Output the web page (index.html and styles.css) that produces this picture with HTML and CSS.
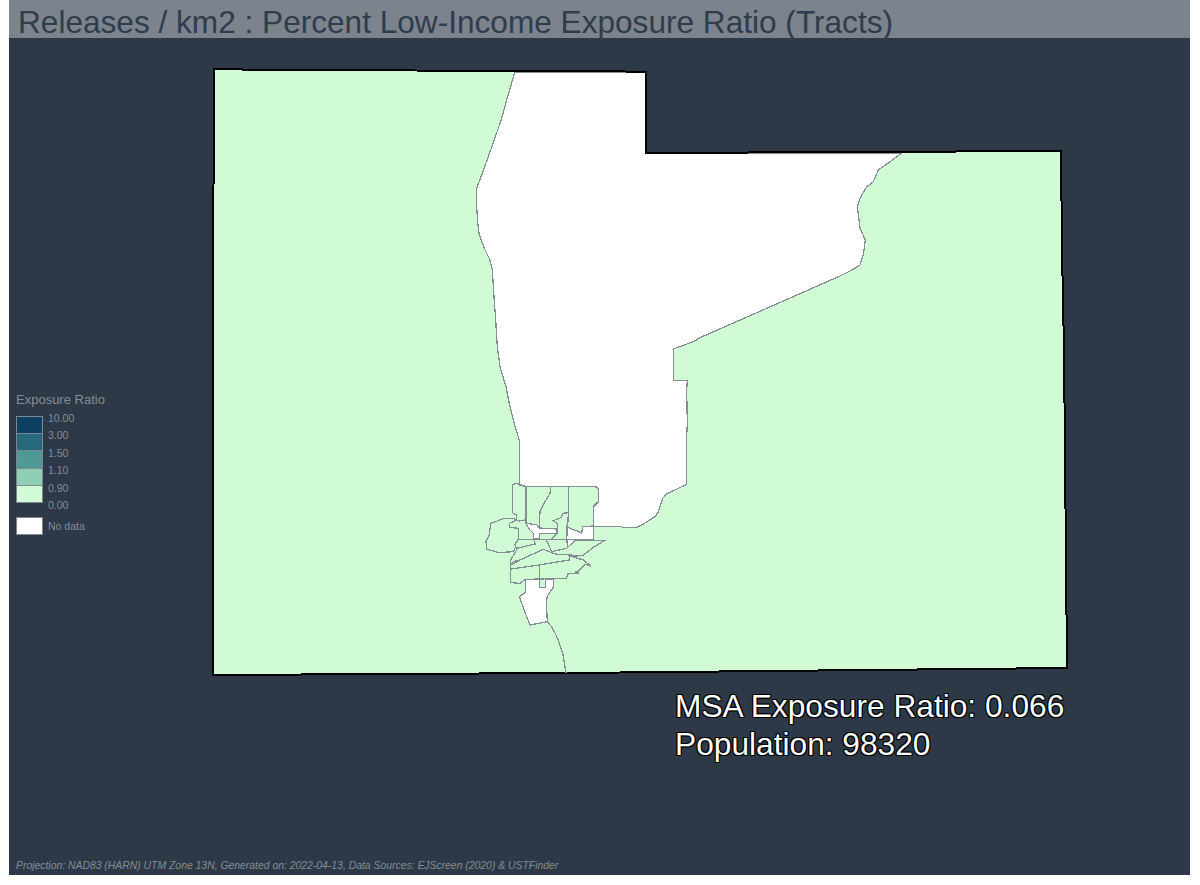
FILE: index.html
```html
<!DOCTYPE html>
<html lang="en">
<head>
<meta charset="utf-8">
<title>Releases / km2 : Percent Low-Income Exposure Ratio (Tracts)</title>
<link rel="stylesheet" href="styles.css">
</head>
<body>
<main class="panel">
  <h1 class="title">Releases / km2 : Percent Low-Income Exposure Ratio (Tracts)</h1>
  <section class="stage">
    <svg class="map" viewBox="9 38 1181 837" width="1181" height="837" aria-label="Tract map">
      <path class="county" d="M214,69 L270,70 L559,71 L604,71 L646,72 L646,153 L1061,151 L1062,250 L1064,350 L1066,560 L1067,668 L570,673 L213,675 L213,310 Z"/>
      <path class="nodata" d="M514.7,72 L511.7,83 L506.7,100 L501.7,118 L496.7,133 L488.3,156.7 L481.7,175 L476.7,188 L476.7,206.7 L477.7,223 L479.3,235 L485,250 L490,260 L492.3,270 L494,296.7 L495.7,320 L497.3,346.7 L500,366.7 L506,386.7 L510,406.7 L515,426.7 L519.3,440 L519.3,485 L526.3,486.7 L595,486.7 L598.3,488.3 L598.3,501.7 L593.3,506 L593.3,526.7 L621.7,526.7 L622.3,527.3 L636.7,527.3 L643.3,524 L655,516.7 L658.3,511.7 L662.7,498.3 L666.7,494 L686.7,484.3 L686.7,436.7 L687.3,423 L686.7,390 L687.3,380.7 L673.3,380.7 L673.3,349 L693.3,341.7 L700,337.7 L840,276 L853.3,269.3 L860,265 L863.3,255 L865.3,240 L860,228.3 L857.3,206.7 L860,198.3 L866.7,186.7 L873.3,181.7 L878.3,170 L890,161.7 L901.7,153 L646,153 L646,72 Z"/>
      <path class="outline" d="M214,69 L270,70 L559,71 L604,71 L646,72 L646,153 L1061,151 L1062,250 L1064,350 L1066,560 L1067,668 L570,673 L213,675 L213,310 Z"/>
      <g class="city" transform="translate(470 470) scale(.33333)">
        <path class="white" d="M168,160 L200,164 L208,174 L260,177 L260,190 L208,190 L208,207 L190,207 L190,190 L178,178 Z"/>
        <path class="white" d="M290,168 L300,175 L320,182 L335,190 L338,170 L370,168 L370,208 L318,210 L300,225 L293,232 L290,205 Z"/>
        <path class="white" d="M166,328 L208,328 L208,352 L226,352 L226,328 L250,328 L250,352 L232,378 L229,395 L232,455 L180,465 L168,435 L148,380 L166,368 Z"/>
        <path d="M128,43 L127,128 L140,135 L140,150 L148,153 L165,150 L168,160"/>
        <path d="M128,43 L138,41 L148,42 L168,50 L380,50 L386,60 L386,95 L371,110 L370,168"/>
        <path d="M168,50 L168,160"/>
        <path d="M242,50 L240,70 L225,95 L210,125 L208,174"/>
        <path d="M295,50 L295,128 L278,130 L275,142 L250,152 L262,162 L262,190 L245,207"/>
        <path d="M295,128 L293,168 L290,205"/>
        <path d="M140,150 L128,145 L100,146 L62,160 L58,195 L48,215 L50,237 L85,248 L130,245 L135,235"/>
        <path d="M140,150 L118,160 L118,172 L145,175 L145,208"/>
        <path d="M145,208 L290,208 L318,210 L403,212 L370,232 L338,257 L300,255 L255,252 L220,238 L150,270 L122,285 L122,338 L150,340 L166,328 L290,325 L293,312 L320,310 L345,283 L362,288 L340,270 L300,258"/>
        <path d="M298,258 L298,270 L208,285 L122,297"/>
        <path d="M208,285 L208,352"/>
        <path d="M145,208 L135,222 L140,240 L122,270 L122,285"/>
        <path d="M140,235 L195,222 L192,208"/>
        <path d="M228,208 L245,245 L290,235 L293,232"/>
        <path d="M122,285 L130,275 L150,270"/>
        <path d="M305,257 L325,259"/>
        <path class="dot" d="M318,305 L325,305 L325,311 L318,311 Z"/>
      </g>
      <path class="tract" d="M547,621.7 L551.7,626.7 L556,635 L559,642 L563,655 L566,673"/>
      <path class="tract" d="M593.3,526.7 L593.3,540"/>
    </svg>
    <aside class="legend">
      <div class="legend-title">Exposure Ratio</div>
      <div class="scale">
        <div class="ramp">
          <span class="swatch s1"></span>
          <span class="swatch s2"></span>
          <span class="swatch s3"></span>
          <span class="swatch s4"></span>
          <span class="swatch s5"></span>
        </div>
        <ul class="breaks">
          <li>10.00</li><li>3.00</li><li>1.50</li><li>1.10</li><li>0.90</li><li>0.00</li>
        </ul>
      </div>
      <div class="nodata-row"><span class="swatch-nodata"></span><span>No data</span></div>
    </aside>
    <div class="stats">MSA Exposure Ratio: 0.066<br>Population: 98320</div>
    <footer class="credits">Projection: NAD83 (HARN) UTM Zone 13N, Generated on: 2022-04-13, Data Sources: EJScreen (2020) &amp; USTFinder</footer>
  </section>
</main>
</body>
</html>
```
FILE: styles.css
```css
html, body { margin: 0; padding: 0; background: #fff; }
body { padding: 0 10px 10px 9px; font-family: "Liberation Sans", Arial, sans-serif; }
.panel { display: flex; flex-direction: column; height: 875px; background: #2d3947; overflow: hidden; }
.title { margin: 0; height: 38px; padding-left: 9px; background: #7c838c; color: #2e3c4d; font-size: 31.6px; font-weight: 400; line-height: 44px; white-space: nowrap; box-sizing: border-box; }
.stage { position: relative; flex: 1; }
.map { display: block; }
.county { fill: #d1fbd4; stroke: none; }
.nodata { fill: #fff; stroke: #858d95; stroke-width: 1.25; shape-rendering: crispEdges; }
.outline { fill: none; stroke: #000; stroke-width: 2; shape-rendering: crispEdges; }
.city path, .tract { fill: none; stroke: #858d95; stroke-width: 3.75; shape-rendering: crispEdges; }
.city .white { fill: #fff; }
.city .dot { fill: #858d95; }
.tract { stroke-width: 1.25; }
.legend { position: absolute; left: 7px; top: 354px; color: #868c94; font-size: 10.5px; }
.legend-title { font-size: 13px; line-height: 15px; margin-bottom: 9px; }
.scale { display: flex; gap: 5px; }
.ramp { display: flex; flex-direction: column; width: 27px; border: 1px solid #7f8890; box-sizing: border-box; height: 87px; }
.swatch { flex: 1; border-bottom: 1px solid #7f8890; }
.swatch:last-child { border-bottom: 0; }
.s1 { background: #0d3f60; }
.s2 { background: #26697a; }
.s3 { background: #4f9a97; }
.s4 { background: #8fcfb6; }
.s5 { background: #d1fbd4; }
.breaks { list-style: none; margin: -3px 0 0; padding: 0; display: flex; flex-direction: column; justify-content: space-between; height: 97px; line-height: 10px; }
.nodata-row { display: flex; align-items: center; gap: 5px; margin-top: 7px; }
.swatch-nodata { width: 27px; height: 18px; background: #fff; border: 1px solid #7f8890; box-sizing: border-box; }
.stats { position: absolute; left: 666px; top: 649px; color: #fff; font-size: 31.7px; line-height: 38px; white-space: nowrap; text-shadow: 1px 0 0 #000, -1px 0 0 #000, 0 1px 0 #000, 0 -1px 0 #000, 1px 1px 0 #000, -1px -1px 0 #000, 1px -1px 0 #000, -1px 1px 0 #000; }
.credits { position: absolute; left: 7px; bottom: 3px; color: #868c94; font-size: 10.4px; font-style: italic; line-height: 12px; white-space: nowrap; }
```
